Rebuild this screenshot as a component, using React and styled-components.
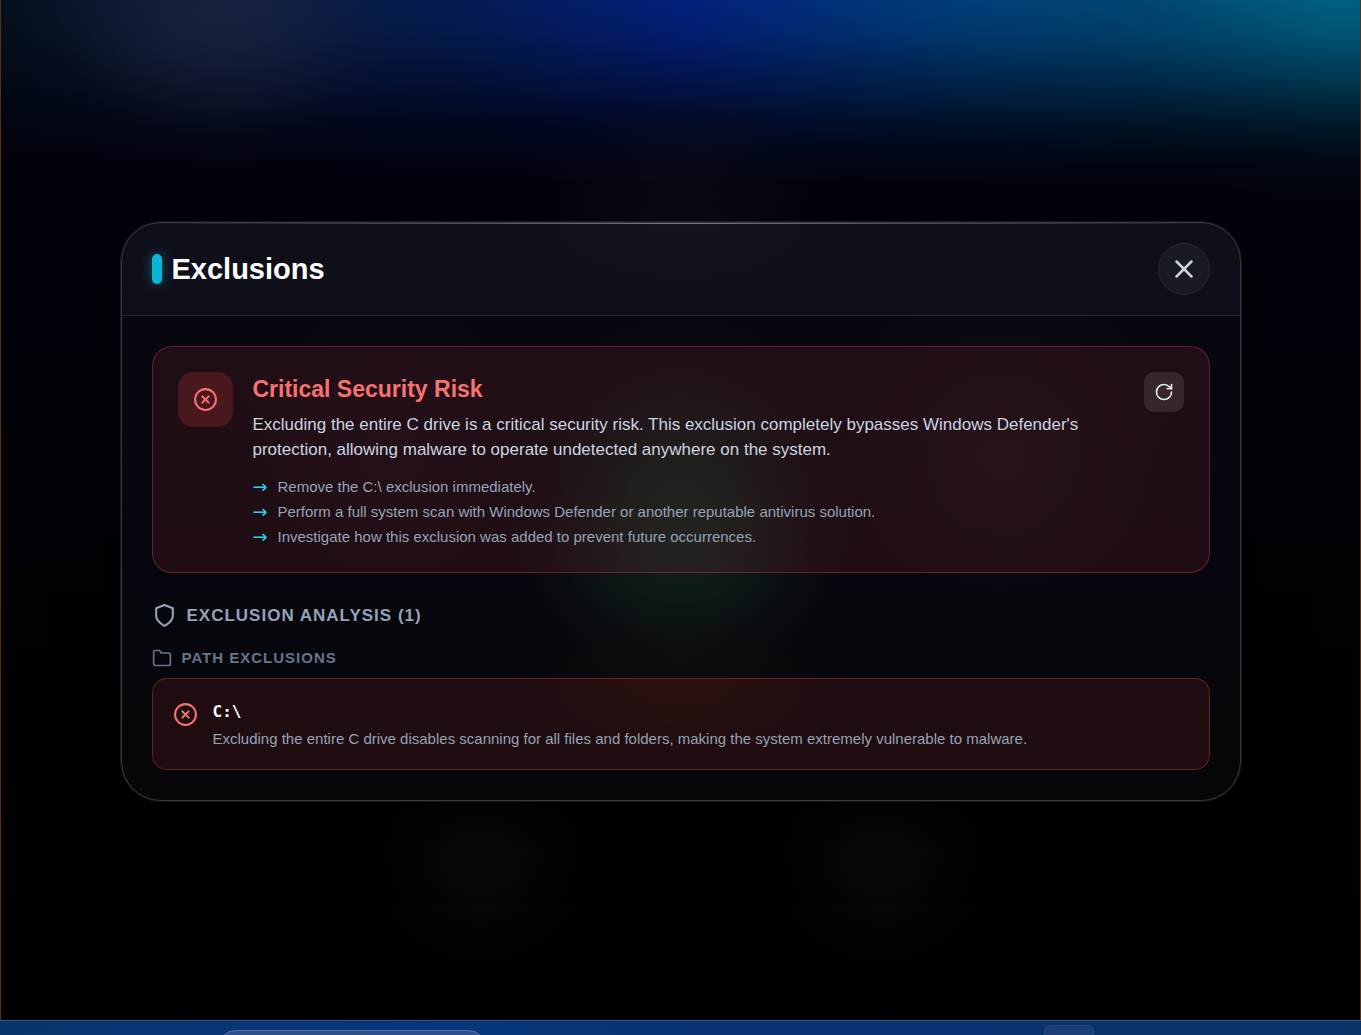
import React from "react";
import styled, { createGlobalStyle, css } from "styled-components";
import { CircleX, RotateCw, X } from "lucide-react";
import { FiFolder, FiShield } from "react-icons/fi";

const recommendations = [
  "Remove the C:\\ exclusion immediately.",
  "Perform a full system scan with Windows Defender or another reputable antivirus solution.",
  "Investigate how this exclusion was added to prevent future occurrences.",
];

const pathExclusions = [
  {
    path: "C:\\",
    reason:
      "Excluding the entire C drive disables scanning for all files and folders, making the system extremely vulnerable to malware.",
  },
];

const App = () => {
  return (
    <>
      <GlobalStyle />
      <Screen>
        <Backdrop>
          <Modal role="dialog" aria-labelledby="modal-title">
            <ModalHeader>
              <ModalTitle id="modal-title">Exclusions</ModalTitle>
              <CloseButton type="button" aria-label="Close">
                <X size={30} />
              </CloseButton>
            </ModalHeader>
            <ModalBody>
              <SummaryCard>
                <SummaryIcon>
                  <CircleX size={25} />
                </SummaryIcon>
                <SummaryText>
                  <SummaryTitle>Critical Security Risk</SummaryTitle>
                  <SummaryDescription>
                    Excluding the entire C drive is a critical security risk.
                    This exclusion completely bypasses Windows Defender's
                    protection, allowing malware to operate undetected anywhere
                    on the system.
                  </SummaryDescription>
                  <RecommendationList>
                    {recommendations.map((text) => (
                      <Recommendation key={text}>{text}</Recommendation>
                    ))}
                  </RecommendationList>
                </SummaryText>
                <RefreshButton type="button" aria-label="Refresh">
                  <RotateCw size={20} />
                </RefreshButton>
              </SummaryCard>
              <section>
                <SectionTitle>
                  <FiShield size={25} />
                  Exclusion Analysis ({pathExclusions.length})
                </SectionTitle>
                <GroupTitle>
                  <FiFolder size={20} />
                  Path Exclusions
                </GroupTitle>
                {pathExclusions.map((item) => (
                  <ExclusionItem key={item.path}>
                    <CircleX size={25} />
                    <ExclusionText>
                      <ExclusionPath>{item.path}</ExclusionPath>
                      <ExclusionReason>{item.reason}</ExclusionReason>
                    </ExclusionText>
                  </ExclusionItem>
                ))}
              </section>
            </ModalBody>
          </Modal>
        </Backdrop>
        <Taskbar>
          <TaskbarSearch />
          <TaskbarButton />
        </Taskbar>
      </Screen>
    </>
  );
};

// soft light spot, fades out without a visible edge
const glow = (shape, rgb, alpha) =>
  `radial-gradient(${shape}, rgba(${rgb}, ${alpha}), rgba(${rgb}, ${
    alpha * 0.8
  }) 25%, rgba(${rgb}, ${alpha * 0.4}) 55%, rgba(${rgb}, ${
    alpha * 0.1
  }) 80%, rgba(${rgb}, 0))`;

const GlobalStyle = createGlobalStyle`
  * {
    box-sizing: border-box;
  }

  body {
    margin: 0;
    background: #000;
    font-family: "Liberation Sans", Arial, sans-serif;
  }

  h1, h2, h3, h4, p, ul {
    margin: 0;
    padding: 0;
  }

  svg {
    flex-shrink: 0;
  }
`;

const Screen = styled.div`
  display: flex;
  flex-direction: column;
  min-height: 100vh;
`;

const Backdrop = styled.main`
  display: flex;
  flex: 1;
  align-items: center;
  justify-content: center;
  padding: 23px 20px 20px;
  border: solid #5a3010;
  border-width: 0 1px;
  background:
    ${glow("ellipse 190px 150px at 210px 20px", "40, 46, 68", 0.45)},
    ${glow("ellipse 170px 150px at 50% 210px", "18, 20, 30", 0.45)},
    ${glow("circle 140px at 480px 855px", "20, 20, 24", 0.4)},
    ${glow("circle 140px at 880px 855px", "20, 20, 24", 0.4)},
    linear-gradient(
      to bottom,
      transparent 0,
      rgba(0, 0, 12, 0.12) 35px,
      rgba(0, 0, 12, 0.42) 80px,
      rgba(0, 0, 12, 0.75) 125px,
      rgba(1, 1, 11, 0.94) 165px,
      #02020b 205px,
      #020208 500px,
      #000 900px
    ),
    linear-gradient(to right, #04101f, #0b1b40 20%, #041c55 35%, #03207c 50%, #003d78 70%, #004672 84%, #005f80 98%);
`;

const Modal = styled.div`
  width: 100%;
  max-width: 1120px;
  border: 1px solid #38383f;
  border-radius: 40px;
  overflow: hidden;
  background:
    ${glow("circle 180px at 50% 275px", "8, 50, 34", 0.55)},
    ${glow("ellipse 180px 120px at 50% 350px", "30, 34, 34", 0.45)},
    ${glow("ellipse 180px 80px at 50% 465px", "40, 20, 10", 0.35)},
    ${glow("circle 180px at 880px 240px", "32, 30, 40", 0.3)},
    ${glow("circle 160px at 270px 240px", "28, 24, 34", 0.25)},
    linear-gradient(#080812, #06070e 60%, #060609);
  box-shadow:
    0 0 0 1px rgba(255, 255, 255, 0.09),
    0 30px 60px rgba(0, 0, 0, 0.5);
`;

const ModalHeader = styled.header`
  display: flex;
  align-items: center;
  justify-content: space-between;
  padding: 20px 30px;
  border-bottom: 1px solid #25242e;
  background:
    linear-gradient(
        to right,
        transparent,
        rgba(255, 255, 255, 0.18) 20%,
        rgba(255, 255, 255, 0.42),
        rgba(255, 255, 255, 0.18) 80%,
        transparent
      )
      top / 100% 1px no-repeat,
    ${glow("ellipse 190px 90px at 50% 0", "255, 255, 255", 0.02)},
    rgba(255, 255, 255, 0.03);
`;

const ModalTitle = styled.h1`
  display: flex;
  align-items: center;
  gap: 10px;
  font-size: 29px;
  line-height: 36px;
  color: #fff;

  &::before {
    content: "";
    width: 10px;
    height: 30px;
    border-radius: 5px;
    background: #06b6d4;
    box-shadow: 0 0 12px rgba(6, 182, 212, 0.5);
  }
`;

const iconButton = css`
  display: flex;
  align-items: center;
  justify-content: center;
  flex-shrink: 0;
  padding: 0;
  cursor: pointer;
`;

const CloseButton = styled.button`
  ${iconButton}
  width: 52px;
  height: 52px;
  border: 1px solid #292831;
  border-radius: 50%;
  color: #cbd5e1;
  background: #1b1a24;
`;

const ModalBody = styled.div`
  display: flex;
  flex-direction: column;
  gap: 30px;
  padding: 30px;
`;

const dangerCard = css`
  display: flex;
  border: 1px solid rgba(239, 68, 68, 0.35);
  background: rgba(239, 68, 68, 0.11);
`;

const SummaryCard = styled.section`
  ${dangerCard}
  align-items: flex-start;
  gap: 20px;
  padding: 25px;
  border-radius: 20px;
`;

const SummaryIcon = styled.div`
  display: flex;
  align-items: center;
  justify-content: center;
  flex-shrink: 0;
  width: 55px;
  height: 55px;
  border-radius: 15px;
  color: #f87171;
  background: rgba(239, 68, 68, 0.2);
`;

const SummaryText = styled.div`
  flex: 1;
`;

const SummaryTitle = styled.h2`
  margin-bottom: 6px;
  font-size: 23px;
  line-height: 34px;
  color: #f87171;
`;

const SummaryDescription = styled.p`
  margin-bottom: 15px;
  font-size: 17px;
  line-height: 25px;
  color: #cbd5e1;
`;

const RecommendationList = styled.ul`
  display: flex;
  flex-direction: column;
  gap: 5px;
  list-style: none;
`;

const Recommendation = styled.li`
  display: flex;
  gap: 10px;
  font-size: 15px;
  line-height: 20px;
  color: #94a3b8;

  &::before {
    content: "→";
    width: 15px;
    font-family: "DejaVu Sans", sans-serif;
    font-size: 18px;
    color: #22d3ee;
  }
`;

const RefreshButton = styled.button`
  ${iconButton}
  width: 40px;
  height: 40px;
  border: 0;
  border-radius: 10px;
  color: #e2e8f0;
  background: rgba(255, 255, 255, 0.1);
`;

const SectionTitle = styled.h3`
  display: flex;
  align-items: center;
  gap: 10px;
  margin-bottom: 20px;
  font-size: 17px;
  line-height: 25px;
  letter-spacing: 1px;
  text-transform: uppercase;
  color: #94a3b8;
`;

const GroupTitle = styled.h4`
  display: flex;
  align-items: center;
  gap: 10px;
  margin-bottom: 10px;
  font-size: 15px;
  line-height: 20px;
  letter-spacing: 1px;
  text-transform: uppercase;
  color: #64748b;
`;

const ExclusionItem = styled.div`
  ${dangerCard}
  gap: 15px;
  padding: 20px;
  border-radius: 15px;

  svg {
    margin-top: 3px;
    color: #f87171;
  }
`;

const ExclusionText = styled.div`
  display: flex;
  flex-direction: column;
  gap: 5px;
`;

const ExclusionPath = styled.p`
  font-family: "DejaVu Sans Mono", monospace;
  font-size: 16px;
  font-weight: 700;
  line-height: 25px;
  color: #fff;
`;

const ExclusionReason = styled.p`
  font-size: 15px;
  line-height: 20px;
  color: #94a3b8;
`;

const Taskbar = styled.footer`
  display: flex;
  justify-content: space-between;
  height: 15px;
  padding: 0 267px 0 219px;
  border-top: 1px solid #33507f;
  overflow: hidden;
  background: linear-gradient(to right, #09356d, #08377c 30%, #083274 55%, #0a3468);
`;

const TaskbarSearch = styled.div`
  width: 266px;
  height: 40px;
  margin-top: 9px;
  border: 1px solid #5271a3;
  border-radius: 16px;
  background: #2d518c;
`;

const TaskbarButton = styled.div`
  width: 50px;
  height: 50px;
  margin-top: 4px;
  border: 1px solid #254a7c;
  border-radius: 6px;
  background: #1b4077;
`;

export default App;
